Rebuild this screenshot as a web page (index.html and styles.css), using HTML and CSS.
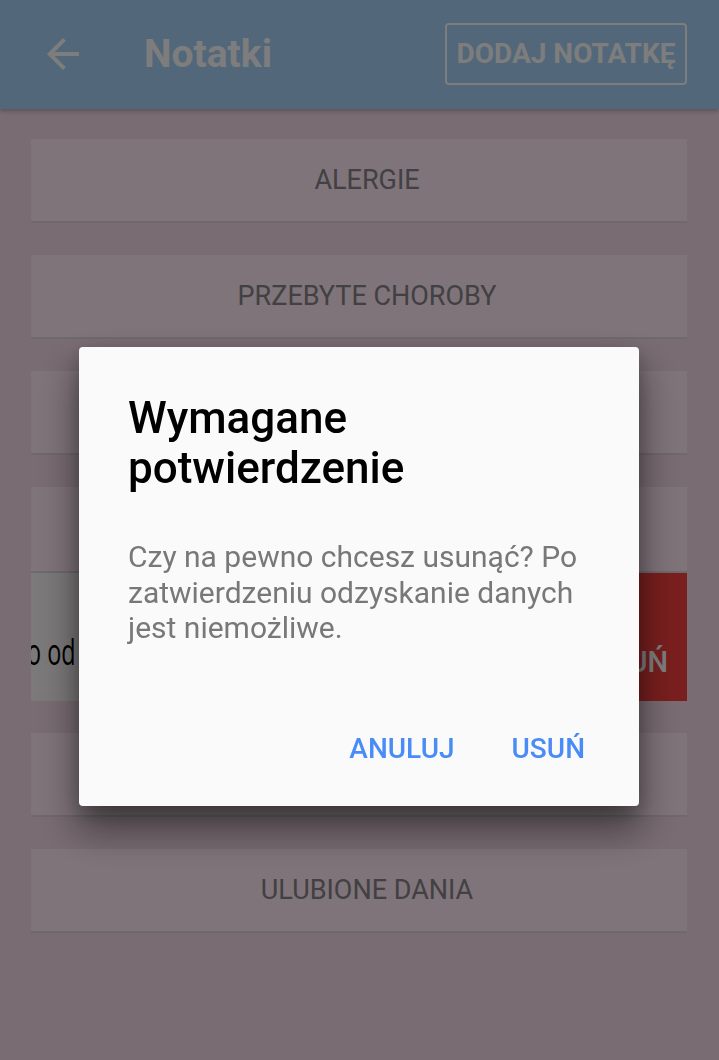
FILE: index.html
```html
<!DOCTYPE html>
<html lang="pl">
<head>
<meta charset="utf-8">
<title>Notatki</title>
<link rel="stylesheet" href="styles.css">
</head>
<body>
<div class="app">
  <header class="topbar">
    <button class="back" aria-label="Wstecz">
      <svg viewBox="0 0 24 24" width="48" height="48"><path d="M20 11H7.83l5.59-5.59L12 4l-8 8 8 8 1.41-1.41L7.83 13H20v-2z" fill="currentColor"/></svg>
    </button>
    <h1 class="title">Notatki</h1>
    <button class="add">DODAJ NOTATKĘ</button>
  </header>
  <main class="list">
    <div class="card">ALERGIE</div>
    <div class="card">PRZEBYTE CHOROBY</div>
    <div class="card">PRZYJMOWANE LEKI</div>
    <div class="group">
      <div class="card">OGÓLNE</div>
      <div class="swipe">
        <div class="swipe-content">
          <span class="swipe-text"><span class="swipe-lead">Katar sienny mocn</span><span>o od marca do maja</span></span>
        </div>
        <div class="swipe-action">
          <svg viewBox="0 0 24 24" width="26" height="26"><path d="M6 19c0 1.1.9 2 2 2h8c1.1 0 2-.9 2-2V7H6v12zM19 4h-3.5l-1-1h-5l-1 1H5v2h14V4z" fill="currentColor"/></svg>
          <span>USUŃ</span>
        </div>
      </div>
    </div>
    <div class="card">NAWYKI</div>
    <div class="card">ULUBIONE DANIA</div>
  </main>
</div>
<div class="scrim">
  <div class="dialog" role="dialog">
    <h2 class="dialog-title">Wymagane potwierdzenie</h2>
    <p class="dialog-body">Czy na pewno chcesz usunąć? Po zatwierdzeniu odzyskanie danych jest niemożliwe.</p>
    <div class="dialog-actions">
      <button class="text-btn">ANULUJ</button>
      <button class="text-btn">USUŃ</button>
    </div>
  </div>
</div>
</body>
</html>
```
FILE: styles.css
```css
* { box-sizing: border-box; }
html, body {
  margin: 0;
  padding: 0;
  height: 100%;
}
body {
  font-family: Roboto, "Noto Sans", sans-serif;
  background: #f2d8e6;
  overflow: hidden;
}
.app {
  min-height: 100%;
}
.topbar {
  height: 109px;
  background: #a4cef4;
  display: flex;
  align-items: center;
  padding: 0 32px 2px 39px;
  box-shadow: 0 2px 4px rgba(0,0,0,0.25);
  position: relative;
  z-index: 1;
}
.back {
  width: 48px;
  height: 48px;
  padding: 0;
  border: 0;
  background: none;
  color: #fafafa;
  display: flex;
}
.title {
  margin: 0 0 0 57px;
  font-size: 39px;
  font-weight: 700;
  line-height: 48px;
  color: #fafafa;
  flex: 1;
}
.add {
  height: 62px;
  width: 242px;
  padding: 0;
  border: 2px solid #fafafa;
  border-radius: 4px;
  background: none;
  color: #fafafa;
  font-family: Roboto, sans-serif;
  font-size: 28px;
  font-weight: 700;
  white-space: nowrap;
}
.list {
  display: flex;
  flex-direction: column;
  gap: 32px;
  padding: 30px 32px 0 31px;
}
.card {
  height: 84px;
  background: #fee8f4;
  border-bottom: 2px solid #dcd2d6;
  display: flex;
  align-items: center;
  justify-content: center;
  font-size: 27px;
  color: #848084;
  padding: 0 0 0 16px;
}
.group {
  display: flex;
  flex-direction: column;
}
.group .card {
  height: 86px;
}
.swipe {
  height: 128px;
  display: flex;
  overflow: hidden;
}
.swipe-content {
  flex: 1;
  background: #f6f2f4;
  overflow: hidden;
  display: flex;
  align-items: center;
  padding-top: 28px;
}
.swipe-text {
  display: flex;
  white-space: nowrap;
  font-family: "Open Sans", sans-serif;
  font-size: 36px;
  color: #000;
  transform: scaleX(0.65);
  transform-origin: left center;
  margin-left: -4px;
}
.swipe-lead {
  display: flex;
  width: 0;
  justify-content: flex-end;
}
.swipe-action {
  width: 118px;
  background: #f43e3e;
  color: #fff;
  display: flex;
  flex-direction: column;
  align-items: center;
  justify-content: center;
  gap: 16px;
  font-size: 29px;
  font-weight: 500;
  padding: 8px 0 0 4px;
}
.scrim {
  position: fixed;
  inset: 0;
  background: rgba(0,0,0,0.5);
  display: flex;
  justify-content: center;
  align-items: flex-start;
  padding: 347px 1px 0 0;
  z-index: 5;
}
.dialog {
  width: 560px;
  background: #fafafa;
  border-radius: 4px;
  padding: 46px 54px 39px 49px;
  box-shadow: 0 22px 38px 2px rgba(0,0,0,0.45), 0 8px 18px rgba(0,0,0,0.2);
}
.dialog-title {
  margin: 0;
  font-size: 44px;
  font-weight: 500;
  line-height: 50px;
  color: #000;
  padding-right: 150px;
}
.dialog-body {
  margin: 46px 0 0;
  font-size: 30px;
  line-height: 35.5px;
  color: #787878;
}
.dialog-actions {
  margin-top: 85px;
  display: flex;
  justify-content: flex-end;
  gap: 57px;
}
.text-btn {
  padding: 0;
  border: 0;
  background: none;
  font-family: Roboto, sans-serif;
  font-size: 28px;
  font-weight: 500;
  line-height: 36px;
  color: #4a8cf7;
}
```
